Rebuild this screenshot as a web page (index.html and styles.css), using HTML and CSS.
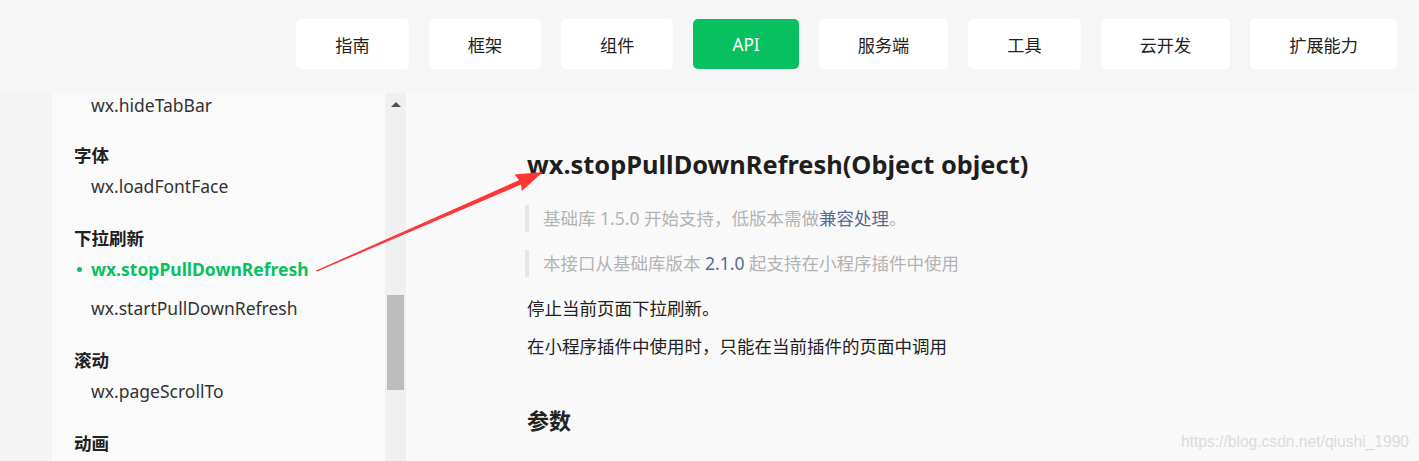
FILE: index.html
```html
<!DOCTYPE html>
<html lang="zh-CN">
<head>
<meta charset="utf-8">
<title>wx.stopPullDownRefresh</title>
<link rel="stylesheet" href="styles.css">
</head>
<body>
<header class="topbar">
  <nav class="nav">
    <a class="nav-btn">指南</a>
    <a class="nav-btn">框架</a>
    <a class="nav-btn">组件</a>
    <a class="nav-btn active">API</a>
    <a class="nav-btn">服务端</a>
    <a class="nav-btn">工具</a>
    <a class="nav-btn">云开发</a>
    <a class="nav-btn">扩展能力</a>
  </nav>
</header>
<div class="main">
  <div class="strip"></div>
  <aside class="sidebar">
    <div class="side-scroll">
      <ul class="side-list">
        <li class="item first">wx.hideTabBar</li>
        <li class="group">字体</li>
        <li class="item">wx.loadFontFace</li>
        <li class="group">下拉刷新</li>
        <li class="item current">wx.stopPullDownRefresh</li>
        <li class="item">wx.startPullDownRefresh</li>
        <li class="group">滚动</li>
        <li class="item">wx.pageScrollTo</li>
        <li class="group">动画</li>
      </ul>
    </div>
    <div class="scrollbar">
      <span class="arrow-up"></span>
      <span class="thumb"></span>
    </div>
  </aside>
  <main class="content">
    <h1 class="title">wx.stopPullDownRefresh(Object object)</h1>
    <blockquote class="note">基础库 1.5.0 开始支持，低版本需做<a class="link">兼容处理</a>。</blockquote>
    <blockquote class="note">本接口从基础库版本 <a class="link">2.1.0</a> 起支持在小程序插件中使用</blockquote>
    <p class="para">停止当前页面下拉刷新。</p>
    <p class="para">在小程序插件中使用时，只能在当前插件的页面中调用</p>
    <h2 class="sub">参数</h2>
  </main>
</div>
<div class="watermark">https://blog.csdn.net/qiushi_1990</div>
<svg class="annot" width="1419" height="461" viewBox="0 0 1419 461">
  <polygon fill="#ff3636" points="316,270.5 519,180.2 514.6,174.4 543,172 521.8,191 521,184.6 317,271.5"/>
</svg>
</body>
</html>
```

FILE: styles.css
```css
* { box-sizing: border-box; }
html, body {
  margin: 0;
  padding: 0;
  width: 1419px;
  height: 461px;
  overflow: hidden;
}
body {
  position: relative;
  background: #f9f9f9;
  font-family: "Noto Sans", "Noto Sans CJK SC", sans-serif;
  color: #333;
}
.topbar {
  height: 93px;
  background: #f6f6f6;
  display: flex;
  justify-content: flex-end;
  padding: 19px 22px 0 0;
}
.nav {
  display: flex;
  gap: 20px;
  height: 50px;
}
.nav-btn {
  display: flex;
  align-items: center;
  justify-content: center;
  padding: 0 39px;
  height: 50px;
  background: #fff;
  border-radius: 5px;
  font-size: 17.2px;
  color: #222;
  font-family: "Noto Sans CJK SC", "Noto Sans", sans-serif;
}
.nav-btn.active {
  background: #07c160;
  color: #fff;
  font-family: "Noto Sans", "Noto Sans CJK SC", sans-serif;
}
.main {
  display: flex;
  height: 368px;
}
.strip {
  width: 52px;
  background: #f4f4f4;
}
.sidebar {
  width: 354px;
  display: flex;
  background: #fafafa;
}
.side-scroll {
  flex: 1;
  overflow: hidden;
  padding-left: 22px;
}
.side-list {
  list-style: none;
  margin: 0;
  padding: 0;
  font-size: 17.5px;
}
.item {
  line-height: 39px;
  padding-left: 17px;
  color: #333;
  position: relative;
}
.item.first {
  line-height: 24px;
}
.group {
  line-height: 25px;
  margin-top: 19px;
  font-weight: 700;
  color: #222;
  font-family: "Noto Sans CJK SC", sans-serif;
}
.item.first + .group {
  margin-top: 25px;
}
.item.current {
  color: #07c160;
  font-weight: 700;
}
.item.current::before {
  content: "";
  position: absolute;
  left: 3px;
  top: 17px;
  width: 5px;
  height: 5px;
  border-radius: 50%;
  background: #07c160;
}
.scrollbar {
  width: 21px;
  background: #f0f0f0;
  display: flex;
  flex-direction: column;
  align-items: center;
  padding-top: 9px;
}
.arrow-up {
  width: 0;
  height: 0;
  border-left: 5px solid transparent;
  border-right: 5px solid transparent;
  border-bottom: 5px solid #505050;
}
.thumb {
  margin-top: 188px;
  width: 17px;
  height: 95px;
  background: #bdbdbd;
}
.content {
  flex: 1;
  padding: 54px 0 0 121px;
  background: #f9f9f9;
}
.title {
  margin: 0;
  font-size: 25.4px;
  line-height: 34px;
  font-weight: 700;
  color: #1f1f1f;
}
.note {
  margin: 24px 0 0 -2px;
  padding-left: 14px;
  border-left: 4px solid #e6e6e6;
  font-size: 17.5px;
  line-height: 27px;
  color: #b3b3b3;
  font-family: "Noto Sans", "Noto Sans CJK SC", sans-serif;
}
.note + .note { margin-top: 18px; }
.link { color: #576b95; }
.para {
  margin: 0;
  font-size: 17.5px;
  line-height: 38px;
  color: #222;
}
.note + .para { margin-top: 12px; }
.sub {
  margin: 38px 0 0 0;
  font-size: 22px;
  line-height: 34px;
  font-weight: 700;
  color: #222;
}
.watermark {
  position: absolute;
  right: 10px;
  bottom: 10px;
  font-family: "Liberation Sans", sans-serif;
  font-size: 15.6px;
  color: #dcdcdc;
}
.annot {
  position: absolute;
  left: 0;
  top: 0;
  pointer-events: none;
}
```
